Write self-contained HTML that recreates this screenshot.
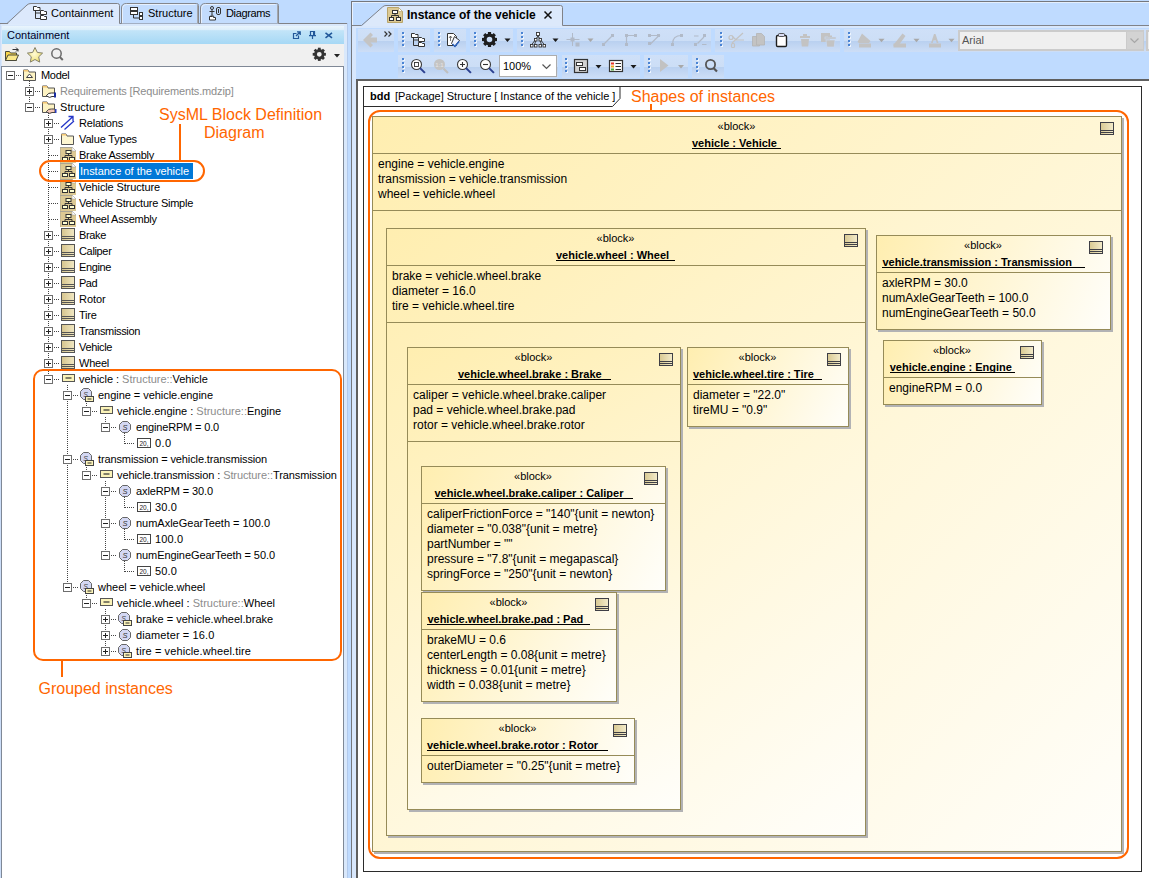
<!DOCTYPE html>
<html lang="en"><head><meta charset="utf-8"><title>Instance of the vehicle</title>
<style>
html,body{margin:0;padding:0}
body{width:1149px;height:878px;overflow:hidden;background:#bfdbff;position:relative;font-family:"Liberation Sans",sans-serif;font-size:11px;color:#000}
.a{position:absolute}
.t{position:absolute;white-space:pre;line-height:16px;height:16px}
.tr{position:absolute;white-space:pre;line-height:16px;height:16px;font-size:11px;left:0}
.g{color:#8c8c8c}
.blk{position:absolute;box-sizing:border-box;border:1px solid #968b58;box-shadow:2px 2px 0 #b2b2b4}
.blk .st{position:absolute;left:0;right:0;text-align:center;font-size:12px;line-height:14px;white-space:pre}
.blk .nm{position:absolute;left:0;right:0;text-align:center;font-size:11px;font-weight:bold;line-height:14px;white-space:pre}
.blk .nm span{text-decoration:underline}
.blk .sep{position:absolute;left:0;right:0;height:1px;background:#968b58}
.blk .at{position:absolute;left:5px;font-size:12px;line-height:15px;white-space:pre}
.ann{position:absolute;color:#ff6600;font-size:16px;line-height:18px;white-space:pre;text-align:center}
.ob{position:absolute;box-sizing:border-box;border:2px solid #ff6600}
</style></head>
<body>
<!-- left browser panel -->
<div class="a" style="left:0;top:23px;width:347px;height:1px;background:#808288"></div><div class="a" style="left:0;top:24px;width:347px;height:854px;background:#d9e8fb"></div><div class="a" style="left:347px;top:23px;width:1px;height:855px;background:#b3caec"></div><div class="a" style="left:0;top:24px;width:1px;height:854px;background:#cbddf8"></div><svg class="a" style="left:0;top:0" width="348" height="25" viewBox="0 0 348 25"><path d="M121.5 23.5V8q0-4.500 5-4.500h70q2 0 2 2V23.5" fill="#c3dcfd" stroke="#85878c"/><path d="M197.500 5V23" stroke="#a4a7ad" fill="none"/><path d="M122.500 23V8.500q0-4 4-4h69" stroke="#e6f0fe" fill="none"/><path d="M200.5 23.5V8q0-4.500 5-4.500h71q2 0 2 2V23.5" fill="#c3dcfd" stroke="#85878c"/><path d="M277.500 5V23" stroke="#a4a7ad" fill="none"/><path d="M201.500 23V8.500q0-4 4-4h70" stroke="#e6f0fe" fill="none"/><path d="M0 24.5 H7 L27 5 q1.500-1.500 4-1.500 H117.5 q2 0 2 2 V24.5 Z" fill="#dce9fc" stroke="none"/><path d="M0 23.5 H7 L27 5 q1.500-1.500 4-1.500 H117.5 q2 0 2 2 V23.5" fill="none" stroke="#808288"/><rect x="8" y="24" width="111" height="1" fill="#deebfc"/><g fill="#fff" stroke="#333" stroke-width="1"><path d="M33.500 10.500v-4h3l1 1h2.500v3z"/><path d="M40.500 14.500v-4h3l1 1h2v3z"/><path d="M40.500 19.500v-4h3l1 1h2v3z"/><path d="M35.500 10.500v8h5 M35.500 13h5" fill="none"/></g><g fill="#fff" stroke="#333" stroke-width="1"><rect x="130.500" y="7.500" width="7" height="3"/><rect x="130.500" y="11.500" width="7" height="3"/><rect x="139.500" y="12.500" width="3" height="3"/><rect x="139.500" y="16.500" width="3" height="3"/><path d="M133.500 14.500v3.500h6" fill="none"/></g><g fill="none" stroke="#333" stroke-width="1"><circle cx="212" cy="8" r="1.500"/><path d="M209.500 11.500h5 M212 9.500v5 M209.500 17.500l2.500-3l2.500 3"/><rect x="216.500" y="7.500" width="4" height="7" rx="1.500"/><path d="M218.500 9v4"/><path d="M209.500 16.500h3l1 1h2v2.500h-6z" fill="#fff"/></g></svg><div class="t" style="left:51px;top:5px">Containment</div><div class="t" style="left:148px;top:5px">Structure</div><div class="t" style="left:226px;top:5px;letter-spacing:-.35px">Diagrams</div><div class="a" style="left:2px;top:26px;width:342px;height:18px;background:linear-gradient(#eaf5fd 0%,#deeffb 20%,#c2e4f8 26%,#a6d8f5 100%)"></div><div class="t" style="left:7px;top:27px;color:#00002a">Containment</div><svg class="a" style="left:290px;top:28px" width="50" height="14" viewBox="0 0 50 14" fill="none" stroke="#22589a" stroke-width="1.500"><path d="M6.500 5.500h-3v5h5v-3" stroke-width="1.200"/><path d="M6 8l4-4 M7 3.800h3.200v3.200" stroke-width="1.300"/><path d="M20.500 3.500h4v4h-4z M19 7.700h7 M22.500 8v3" stroke-width="1.200"/><rect x="23" y="4" width="1.500" height="3.500" fill="#22589a" stroke="none"/><path d="M35.500 4.800l6.500 5 M42 4.800l-6.500 5" stroke-width="1.600"/></svg><div class="a" style="left:2px;top:44px;width:342px;height:22px;background:#f0f0f0"></div><svg class="a" style="left:2px;top:44px" width="342" height="22" viewBox="0 0 342 22"><path d="M3.500 16.500v-9h4l1 1.500h6v7.500z" fill="#f7d44c" stroke="#4a4a3a"/><path d="M3.500 16.500l2.500-5.500h10.500l-2.500 5.500z" fill="#fbe88a" stroke="#4a4a3a"/><path d="M10.500 5.500h5.500v2 M14 3.500l2 2l-2 2" fill="none" stroke="#333"/><path d="M33 3.500l2.300 4.900 5.300.7-3.900 3.700 1 5.300-4.700-2.600-4.700 2.600 1-5.300-3.900-3.700 5.300-.7z" fill="url(#stg)" stroke="#85826a" stroke-width="1"/><defs><radialGradient id="stg" cx=".45" cy=".45" r=".6"><stop offset="0" stop-color="#fffbd8"/><stop offset="1" stop-color="#efe06a"/></radialGradient></defs><circle cx="54.500" cy="9.500" r="4.700" fill="none" stroke="#6a6a6a" stroke-width="1.500"/><path d="M57.800 13l3 3" stroke="#6a6a6a" stroke-width="2" fill="none"/><g transform="translate(317.300 10.300)"><circle r="3.800" fill="none" stroke="#333" stroke-width="2.800"/><rect x="-1.400" y="-6.600" width="2.800" height="3" fill="#333" transform="rotate(0)"/><rect x="-1.400" y="-6.600" width="2.800" height="3" fill="#333" transform="rotate(45)"/><rect x="-1.400" y="-6.600" width="2.800" height="3" fill="#333" transform="rotate(90)"/><rect x="-1.400" y="-6.600" width="2.800" height="3" fill="#333" transform="rotate(135)"/><rect x="-1.400" y="-6.600" width="2.800" height="3" fill="#333" transform="rotate(180)"/><rect x="-1.400" y="-6.600" width="2.800" height="3" fill="#333" transform="rotate(225)"/><rect x="-1.400" y="-6.600" width="2.800" height="3" fill="#333" transform="rotate(270)"/><rect x="-1.400" y="-6.600" width="2.800" height="3" fill="#333" transform="rotate(315)"/></g><path d="M332 10h6l-3 3.500z" fill="#222"/></svg><div class="a" style="left:1px;top:66px;width:343px;height:812px;background:#7f8896"></div><div class="a" style="left:2px;top:67px;width:341px;height:811px;background:#fff"></div><svg class="a" style="left:0;top:0" width="346" height="878" viewBox="0 0 346 878" shape-rendering="crispEdges"><path d="M16 75.5H21" stroke="#444" stroke-dasharray="1 1" fill="none"/><path d="M29.5 81V104" stroke="#444" stroke-dasharray="1 1" fill="none"/><path d="M35 91.5H40" stroke="#444" stroke-dasharray="1 1" fill="none"/><path d="M35 107.5H40" stroke="#444" stroke-dasharray="1 1" fill="none"/><path d="M48.5 113V376" stroke="#444" stroke-dasharray="1 1" fill="none"/><path d="M54 123.5H59" stroke="#444" stroke-dasharray="1 1" fill="none"/><path d="M54 139.5H59" stroke="#444" stroke-dasharray="1 1" fill="none"/><path d="M49 155.5H59" stroke="#444" stroke-dasharray="1 1" fill="none"/><path d="M49 171.5H59" stroke="#444" stroke-dasharray="1 1" fill="none"/><path d="M49 187.5H59" stroke="#444" stroke-dasharray="1 1" fill="none"/><path d="M49 203.5H59" stroke="#444" stroke-dasharray="1 1" fill="none"/><path d="M49 219.5H59" stroke="#444" stroke-dasharray="1 1" fill="none"/><path d="M54 235.5H59" stroke="#444" stroke-dasharray="1 1" fill="none"/><path d="M54 251.5H59" stroke="#444" stroke-dasharray="1 1" fill="none"/><path d="M54 267.5H59" stroke="#444" stroke-dasharray="1 1" fill="none"/><path d="M54 283.5H59" stroke="#444" stroke-dasharray="1 1" fill="none"/><path d="M54 299.5H59" stroke="#444" stroke-dasharray="1 1" fill="none"/><path d="M54 315.5H59" stroke="#444" stroke-dasharray="1 1" fill="none"/><path d="M54 331.5H59" stroke="#444" stroke-dasharray="1 1" fill="none"/><path d="M54 347.5H59" stroke="#444" stroke-dasharray="1 1" fill="none"/><path d="M54 363.5H59" stroke="#444" stroke-dasharray="1 1" fill="none"/><path d="M54 379.5H59" stroke="#444" stroke-dasharray="1 1" fill="none"/><path d="M67.5 385V584" stroke="#444" stroke-dasharray="1 1" fill="none"/><path d="M73 395.5H78" stroke="#444" stroke-dasharray="1 1" fill="none"/><path d="M86.5 401V408" stroke="#444" stroke-dasharray="1 1" fill="none"/><path d="M92 411.5H97" stroke="#444" stroke-dasharray="1 1" fill="none"/><path d="M105.5 417V424" stroke="#444" stroke-dasharray="1 1" fill="none"/><path d="M111 427.5H116" stroke="#444" stroke-dasharray="1 1" fill="none"/><path d="M124.5 433V444" stroke="#444" stroke-dasharray="1 1" fill="none"/><path d="M125 443.5H135" stroke="#444" stroke-dasharray="1 1" fill="none"/><path d="M73 459.5H78" stroke="#444" stroke-dasharray="1 1" fill="none"/><path d="M86.5 465V472" stroke="#444" stroke-dasharray="1 1" fill="none"/><path d="M92 475.5H97" stroke="#444" stroke-dasharray="1 1" fill="none"/><path d="M105.5 481V552" stroke="#444" stroke-dasharray="1 1" fill="none"/><path d="M111 491.5H116" stroke="#444" stroke-dasharray="1 1" fill="none"/><path d="M124.5 497V508" stroke="#444" stroke-dasharray="1 1" fill="none"/><path d="M125 507.5H135" stroke="#444" stroke-dasharray="1 1" fill="none"/><path d="M111 523.5H116" stroke="#444" stroke-dasharray="1 1" fill="none"/><path d="M124.5 529V540" stroke="#444" stroke-dasharray="1 1" fill="none"/><path d="M125 539.5H135" stroke="#444" stroke-dasharray="1 1" fill="none"/><path d="M111 555.5H116" stroke="#444" stroke-dasharray="1 1" fill="none"/><path d="M124.5 561V572" stroke="#444" stroke-dasharray="1 1" fill="none"/><path d="M125 571.5H135" stroke="#444" stroke-dasharray="1 1" fill="none"/><path d="M73 587.5H78" stroke="#444" stroke-dasharray="1 1" fill="none"/><path d="M86.5 593V600" stroke="#444" stroke-dasharray="1 1" fill="none"/><path d="M92 603.5H97" stroke="#444" stroke-dasharray="1 1" fill="none"/><path d="M105.5 609V648" stroke="#444" stroke-dasharray="1 1" fill="none"/><path d="M111 619.5H116" stroke="#444" stroke-dasharray="1 1" fill="none"/><path d="M111 635.5H116" stroke="#444" stroke-dasharray="1 1" fill="none"/><path d="M111 651.5H116" stroke="#444" stroke-dasharray="1 1" fill="none"/></svg><div class="a" style="left:79px;top:163px;width:114px;height:16px;background:#0078d7"></div><svg class="a" style="left:6px;top:71px" width="9" height="9" viewBox="0 0 9 9" shape-rendering="crispEdges"><rect x=".5" y=".5" width="8" height="8" fill="#fff" stroke="#6e6e6e"/><path d="M2 4.500h5" stroke="#222" fill="none"/></svg><svg class="a" style="left:22px;top:67px" width="16" height="16" viewBox="0 0 16 16"><path d="M1.500 13.500v-10.500h4.500l1 2h6.500v8.500z" fill="#fdf3c3" stroke="#555"/><path d="M1.500 3h4.500l.8 1.600h-5.300z" fill="#f3c673" stroke="none"/><path d="M4.500 10.500l3-3.500l3 3.500z" fill="#fff" stroke="#444"/></svg><div class="tr" style="left:41px;top:67px;letter-spacing:-0.29px">Model</div><svg class="a" style="left:25px;top:87px" width="9" height="9" viewBox="0 0 9 9" shape-rendering="crispEdges"><rect x=".5" y=".5" width="8" height="8" fill="#fff" stroke="#6e6e6e"/><path d="M2 4.500h5 M4.500 2v5" stroke="#222" fill="none"/></svg><svg class="a" style="left:41px;top:83px" width="16" height="16" viewBox="0 0 16 16"><path d="M1.500 13.500v-10.500h4.500l1 2h6.500v8.500z" fill="#fdf3c3" stroke="#555"/><path d="M1.500 3h4.500l.8 1.600h-5.300z" fill="#f3c673" stroke="none"/><path d="M5.500 12.500q2-3 5-2.500l3.500 0v3.500h-3q-2 2-5.500-.5z" fill="#fff" stroke="#333"/><path d="M13 9.500h2v5h-2z" fill="#1a2ea0"/></svg><div class="tr" style="left:60px;top:83px;letter-spacing:-0.15px"><span class="g">Requirements [Requirements.mdzip]</span></div><svg class="a" style="left:25px;top:103px" width="9" height="9" viewBox="0 0 9 9" shape-rendering="crispEdges"><rect x=".5" y=".5" width="8" height="8" fill="#fff" stroke="#6e6e6e"/><path d="M2 4.500h5" stroke="#222" fill="none"/></svg><svg class="a" style="left:41px;top:99px" width="16" height="16" viewBox="0 0 16 16"><path d="M1.500 13.500v-10.500h4.500l1 2h6.500v8.500z" fill="#fdf3c3" stroke="#555"/><path d="M1.500 3h4.500l.8 1.600h-5.300z" fill="#f3c673" stroke="none"/><path d="M5.500 12.500q2-3 5-2.500l3.500 0v3.500h-3q-2 2-5.500-.5z" fill="#f6c9b8" stroke="#444"/><path d="M14 10h1.500v4h-1.500z" fill="#2a3ec0"/></svg><div class="tr" style="left:60px;top:99px;letter-spacing:0.04px">Structure</div><svg class="a" style="left:44px;top:119px" width="9" height="9" viewBox="0 0 9 9" shape-rendering="crispEdges"><rect x=".5" y=".5" width="8" height="8" fill="#fff" stroke="#6e6e6e"/><path d="M2 4.500h5 M4.500 2v5" stroke="#222" fill="none"/></svg><svg class="a" style="left:60px;top:115px" width="16" height="16" viewBox="0 0 16 16"><path d="M1 12.500L12.500 2 M8.500 1.500h4.500v4.500 M4.500 14.500L14 6" fill="none" stroke="#2436c8" stroke-width="1.300"/></svg><div class="tr" style="left:79px;top:115px;letter-spacing:-0.21px">Relations</div><svg class="a" style="left:44px;top:135px" width="9" height="9" viewBox="0 0 9 9" shape-rendering="crispEdges"><rect x=".5" y=".5" width="8" height="8" fill="#fff" stroke="#6e6e6e"/><path d="M2 4.500h5 M4.500 2v5" stroke="#222" fill="none"/></svg><svg class="a" style="left:60px;top:131px" width="16" height="16" viewBox="0 0 16 16"><path d="M1.500 13.500v-10.500h4.500l1 2h6.500v8.500z" fill="#fdf6d0" stroke="#555"/><path d="M1.500 3h4.500l.8 1.600h-5.300z" fill="#f3c673" stroke="none"/></svg><div class="tr" style="left:79px;top:131px;letter-spacing:-0.14px">Value Types</div><svg class="a" style="left:60px;top:147px" width="16" height="16" viewBox="0 0 16 16"><path d="M0 0h12l4 4v12h-16z" fill="#dcc993"/><path d="M12 0l4 4h-4z" fill="#fff" stroke="#999" stroke-width=".5"/><path d="M0 16V.5H12" fill="none" stroke="#a9a596"/><g fill="#ffffd2" stroke="#333"><rect x="6" y="3.500" width="5" height="3"/><rect x="2.500" y="10.500" width="5" height="3"/><rect x="9.500" y="10.500" width="5" height="3"/><path d="M8.500 6.500v2 M5 10.500v-2h7v2" fill="none"/></g></svg><div class="tr" style="left:79px;top:147px;letter-spacing:-0.28px">Brake Assembly</div><svg class="a" style="left:60px;top:163px" width="16" height="16" viewBox="0 0 16 16"><path d="M0 0h12l4 4v12h-16z" fill="#dcc993"/><path d="M12 0l4 4h-4z" fill="#fff" stroke="#999" stroke-width=".5"/><path d="M0 16V.5H12" fill="none" stroke="#a9a596"/><g fill="#ffffd2" stroke="#333"><rect x="6" y="3.500" width="5" height="3"/><rect x="2.500" y="10.500" width="5" height="3"/><rect x="9.500" y="10.500" width="5" height="3"/><path d="M8.500 6.500v2 M5 10.500v-2h7v2" fill="none"/></g></svg><div class="tr" style="left:80px;top:163px;color:#fff;letter-spacing:-0.02px">Instance of the vehicle</div><svg class="a" style="left:60px;top:179px" width="16" height="16" viewBox="0 0 16 16"><path d="M0 0h12l4 4v12h-16z" fill="#dcc993"/><path d="M12 0l4 4h-4z" fill="#fff" stroke="#999" stroke-width=".5"/><path d="M0 16V.5H12" fill="none" stroke="#a9a596"/><g fill="#ffffd2" stroke="#333"><rect x="6" y="3.500" width="5" height="3"/><rect x="2.500" y="10.500" width="5" height="3"/><rect x="9.500" y="10.500" width="5" height="3"/><path d="M8.500 6.500v2 M5 10.500v-2h7v2" fill="none"/></g></svg><div class="tr" style="left:79px;top:179px;letter-spacing:-0.13px">Vehicle Structure</div><svg class="a" style="left:60px;top:195px" width="16" height="16" viewBox="0 0 16 16"><path d="M0 0h12l4 4v12h-16z" fill="#dcc993"/><path d="M12 0l4 4h-4z" fill="#fff" stroke="#999" stroke-width=".5"/><path d="M0 16V.5H12" fill="none" stroke="#a9a596"/><g fill="#ffffd2" stroke="#333"><rect x="6" y="3.500" width="5" height="3"/><rect x="2.500" y="10.500" width="5" height="3"/><rect x="9.500" y="10.500" width="5" height="3"/><path d="M8.500 6.500v2 M5 10.500v-2h7v2" fill="none"/></g></svg><div class="tr" style="left:79px;top:195px;letter-spacing:-0.24px">Vehicle Structure Simple</div><svg class="a" style="left:60px;top:211px" width="16" height="16" viewBox="0 0 16 16"><path d="M0 0h12l4 4v12h-16z" fill="#dcc993"/><path d="M12 0l4 4h-4z" fill="#fff" stroke="#999" stroke-width=".5"/><path d="M0 16V.5H12" fill="none" stroke="#a9a596"/><g fill="#ffffd2" stroke="#333"><rect x="6" y="3.500" width="5" height="3"/><rect x="2.500" y="10.500" width="5" height="3"/><rect x="9.500" y="10.500" width="5" height="3"/><path d="M8.500 6.500v2 M5 10.500v-2h7v2" fill="none"/></g></svg><div class="tr" style="left:79px;top:211px;letter-spacing:-0.26px">Wheel Assembly</div><svg class="a" style="left:44px;top:231px" width="9" height="9" viewBox="0 0 9 9" shape-rendering="crispEdges"><rect x=".5" y=".5" width="8" height="8" fill="#fff" stroke="#6e6e6e"/><path d="M2 4.500h5 M4.500 2v5" stroke="#222" fill="none"/></svg><svg class="a" style="left:60px;top:227px" width="16" height="16" viewBox="0 0 16 16"><defs><linearGradient id="bg" x1="0" y1="0" x2="1" y2="0"><stop offset="0" stop-color="#d6c48c"/><stop offset="1" stop-color="#f1e8c4"/></linearGradient></defs><rect x="1.500" y="1.500" width="13" height="12" fill="url(#bg)" stroke="#555"/><path d="M2 9.500h12 M2 11.500h12" stroke="#555" fill="none"/></svg><div class="tr" style="left:79px;top:227px;letter-spacing:-0.35px">Brake</div><svg class="a" style="left:44px;top:247px" width="9" height="9" viewBox="0 0 9 9" shape-rendering="crispEdges"><rect x=".5" y=".5" width="8" height="8" fill="#fff" stroke="#6e6e6e"/><path d="M2 4.500h5 M4.500 2v5" stroke="#222" fill="none"/></svg><svg class="a" style="left:60px;top:243px" width="16" height="16" viewBox="0 0 16 16"><defs><linearGradient id="bg" x1="0" y1="0" x2="1" y2="0"><stop offset="0" stop-color="#d6c48c"/><stop offset="1" stop-color="#f1e8c4"/></linearGradient></defs><rect x="1.500" y="1.500" width="13" height="12" fill="url(#bg)" stroke="#555"/><path d="M2 9.500h12 M2 11.500h12" stroke="#555" fill="none"/></svg><div class="tr" style="left:79px;top:243px;letter-spacing:-0.34px">Caliper</div><svg class="a" style="left:44px;top:263px" width="9" height="9" viewBox="0 0 9 9" shape-rendering="crispEdges"><rect x=".5" y=".5" width="8" height="8" fill="#fff" stroke="#6e6e6e"/><path d="M2 4.500h5 M4.500 2v5" stroke="#222" fill="none"/></svg><svg class="a" style="left:60px;top:259px" width="16" height="16" viewBox="0 0 16 16"><defs><linearGradient id="bg" x1="0" y1="0" x2="1" y2="0"><stop offset="0" stop-color="#d6c48c"/><stop offset="1" stop-color="#f1e8c4"/></linearGradient></defs><rect x="1.500" y="1.500" width="13" height="12" fill="url(#bg)" stroke="#555"/><path d="M2 9.500h12 M2 11.500h12" stroke="#555" fill="none"/></svg><div class="tr" style="left:79px;top:259px;letter-spacing:-0.38px">Engine</div><svg class="a" style="left:44px;top:279px" width="9" height="9" viewBox="0 0 9 9" shape-rendering="crispEdges"><rect x=".5" y=".5" width="8" height="8" fill="#fff" stroke="#6e6e6e"/><path d="M2 4.500h5 M4.500 2v5" stroke="#222" fill="none"/></svg><svg class="a" style="left:60px;top:275px" width="16" height="16" viewBox="0 0 16 16"><defs><linearGradient id="bg" x1="0" y1="0" x2="1" y2="0"><stop offset="0" stop-color="#d6c48c"/><stop offset="1" stop-color="#f1e8c4"/></linearGradient></defs><rect x="1.500" y="1.500" width="13" height="12" fill="url(#bg)" stroke="#555"/><path d="M2 9.500h12 M2 11.500h12" stroke="#555" fill="none"/></svg><div class="tr" style="left:79px;top:275px;letter-spacing:-0.53px">Pad</div><svg class="a" style="left:44px;top:295px" width="9" height="9" viewBox="0 0 9 9" shape-rendering="crispEdges"><rect x=".5" y=".5" width="8" height="8" fill="#fff" stroke="#6e6e6e"/><path d="M2 4.500h5 M4.500 2v5" stroke="#222" fill="none"/></svg><svg class="a" style="left:60px;top:291px" width="16" height="16" viewBox="0 0 16 16"><defs><linearGradient id="bg" x1="0" y1="0" x2="1" y2="0"><stop offset="0" stop-color="#d6c48c"/><stop offset="1" stop-color="#f1e8c4"/></linearGradient></defs><rect x="1.500" y="1.500" width="13" height="12" fill="url(#bg)" stroke="#555"/><path d="M2 9.500h12 M2 11.500h12" stroke="#555" fill="none"/></svg><div class="tr" style="left:79px;top:291px;letter-spacing:-0.06px">Rotor</div><svg class="a" style="left:44px;top:311px" width="9" height="9" viewBox="0 0 9 9" shape-rendering="crispEdges"><rect x=".5" y=".5" width="8" height="8" fill="#fff" stroke="#6e6e6e"/><path d="M2 4.500h5 M4.500 2v5" stroke="#222" fill="none"/></svg><svg class="a" style="left:60px;top:307px" width="16" height="16" viewBox="0 0 16 16"><defs><linearGradient id="bg" x1="0" y1="0" x2="1" y2="0"><stop offset="0" stop-color="#d6c48c"/><stop offset="1" stop-color="#f1e8c4"/></linearGradient></defs><rect x="1.500" y="1.500" width="13" height="12" fill="url(#bg)" stroke="#555"/><path d="M2 9.500h12 M2 11.500h12" stroke="#555" fill="none"/></svg><div class="tr" style="left:79px;top:307px;letter-spacing:-0.19px">Tire</div><svg class="a" style="left:44px;top:327px" width="9" height="9" viewBox="0 0 9 9" shape-rendering="crispEdges"><rect x=".5" y=".5" width="8" height="8" fill="#fff" stroke="#6e6e6e"/><path d="M2 4.500h5 M4.500 2v5" stroke="#222" fill="none"/></svg><svg class="a" style="left:60px;top:323px" width="16" height="16" viewBox="0 0 16 16"><defs><linearGradient id="bg" x1="0" y1="0" x2="1" y2="0"><stop offset="0" stop-color="#d6c48c"/><stop offset="1" stop-color="#f1e8c4"/></linearGradient></defs><rect x="1.500" y="1.500" width="13" height="12" fill="url(#bg)" stroke="#555"/><path d="M2 9.500h12 M2 11.500h12" stroke="#555" fill="none"/></svg><div class="tr" style="left:79px;top:323px;letter-spacing:-0.33px">Transmission</div><svg class="a" style="left:44px;top:343px" width="9" height="9" viewBox="0 0 9 9" shape-rendering="crispEdges"><rect x=".5" y=".5" width="8" height="8" fill="#fff" stroke="#6e6e6e"/><path d="M2 4.500h5 M4.500 2v5" stroke="#222" fill="none"/></svg><svg class="a" style="left:60px;top:339px" width="16" height="16" viewBox="0 0 16 16"><defs><linearGradient id="bg" x1="0" y1="0" x2="1" y2="0"><stop offset="0" stop-color="#d6c48c"/><stop offset="1" stop-color="#f1e8c4"/></linearGradient></defs><rect x="1.500" y="1.500" width="13" height="12" fill="url(#bg)" stroke="#555"/><path d="M2 9.500h12 M2 11.500h12" stroke="#555" fill="none"/></svg><div class="tr" style="left:79px;top:339px;letter-spacing:-0.35px">Vehicle</div><svg class="a" style="left:44px;top:359px" width="9" height="9" viewBox="0 0 9 9" shape-rendering="crispEdges"><rect x=".5" y=".5" width="8" height="8" fill="#fff" stroke="#6e6e6e"/><path d="M2 4.500h5 M4.500 2v5" stroke="#222" fill="none"/></svg><svg class="a" style="left:60px;top:355px" width="16" height="16" viewBox="0 0 16 16"><defs><linearGradient id="bg" x1="0" y1="0" x2="1" y2="0"><stop offset="0" stop-color="#d6c48c"/><stop offset="1" stop-color="#f1e8c4"/></linearGradient></defs><rect x="1.500" y="1.500" width="13" height="12" fill="url(#bg)" stroke="#555"/><path d="M2 9.500h12 M2 11.500h12" stroke="#555" fill="none"/></svg><div class="tr" style="left:79px;top:355px;letter-spacing:-0.24px">Wheel</div><svg class="a" style="left:44px;top:375px" width="9" height="9" viewBox="0 0 9 9" shape-rendering="crispEdges"><rect x=".5" y=".5" width="8" height="8" fill="#fff" stroke="#6e6e6e"/><path d="M2 4.500h5" stroke="#222" fill="none"/></svg><svg class="a" style="left:60px;top:371px" width="16" height="16" viewBox="0 0 16 16"><rect x="2.500" y="3.500" width="12" height="7" fill="#fbf3b8" stroke="#555"/><path d="M5.500 7h6" stroke="#333" stroke-width="1.200"/></svg><div class="tr" style="left:79px;top:371px;letter-spacing:-0.03px">vehicle : <span class="g">Structure::</span>Vehicle</div><svg class="a" style="left:63px;top:391px" width="9" height="9" viewBox="0 0 9 9" shape-rendering="crispEdges"><rect x=".5" y=".5" width="8" height="8" fill="#fff" stroke="#6e6e6e"/><path d="M2 4.500h5" stroke="#222" fill="none"/></svg><svg class="a" style="left:79px;top:387px" width="16" height="16" viewBox="0 0 16 16"><path d="M4.500 1.500h5l3 3v5l-3 3h-5l-3-3v-5z" fill="#d3d7f3" stroke="#666"/><text x="6.500" y="9.500" font-size="7" font-style="italic" text-anchor="middle" fill="#444" font-family="Liberation Sans, sans-serif">S</text><rect x="6.500" y="9.500" width="8" height="5" fill="#fbf3b8" stroke="#444"/><path d="M8.500 12h4" stroke="#333"/></svg><div class="tr" style="left:98px;top:387px;letter-spacing:-0.04px">engine = vehicle.engine</div><svg class="a" style="left:82px;top:407px" width="9" height="9" viewBox="0 0 9 9" shape-rendering="crispEdges"><rect x=".5" y=".5" width="8" height="8" fill="#fff" stroke="#6e6e6e"/><path d="M2 4.500h5" stroke="#222" fill="none"/></svg><svg class="a" style="left:98px;top:403px" width="16" height="16" viewBox="0 0 16 16"><rect x="2.500" y="3.500" width="12" height="7" fill="#fbf3b8" stroke="#555"/><path d="M5.500 7h6" stroke="#333" stroke-width="1.200"/></svg><div class="tr" style="left:117px;top:403px;letter-spacing:-0.01px">vehicle.engine : <span class="g">Structure::</span>Engine</div><svg class="a" style="left:101px;top:423px" width="9" height="9" viewBox="0 0 9 9" shape-rendering="crispEdges"><rect x=".5" y=".5" width="8" height="8" fill="#fff" stroke="#6e6e6e"/><path d="M2 4.500h5" stroke="#222" fill="none"/></svg><svg class="a" style="left:117px;top:419px" width="16" height="16" viewBox="0 0 16 16"><path d="M5.500 2.500h5l3 3v5l-3 3h-5l-3-3v-5z" fill="#d3d7f3" stroke="#666"/><text x="8" y="10.800" font-size="7.500" font-style="italic" text-anchor="middle" fill="#333" font-family="Liberation Sans, sans-serif">S</text></svg><div class="tr" style="left:136px;top:419px;letter-spacing:-0.15px">engineRPM = 0.0</div><svg class="a" style="left:136px;top:435px" width="16" height="16" viewBox="0 0 16 16"><rect x="1.500" y="3.500" width="13" height="9" fill="#fff" stroke="#444"/><text x="8" y="10.600" font-size="6.500" text-anchor="middle" fill="#222" font-family="Liberation Sans, sans-serif">20,</text></svg><div class="tr" style="left:155px;top:435px;letter-spacing:0.37px">0.0</div><svg class="a" style="left:63px;top:455px" width="9" height="9" viewBox="0 0 9 9" shape-rendering="crispEdges"><rect x=".5" y=".5" width="8" height="8" fill="#fff" stroke="#6e6e6e"/><path d="M2 4.500h5" stroke="#222" fill="none"/></svg><svg class="a" style="left:79px;top:451px" width="16" height="16" viewBox="0 0 16 16"><path d="M4.500 1.500h5l3 3v5l-3 3h-5l-3-3v-5z" fill="#d3d7f3" stroke="#666"/><text x="6.500" y="9.500" font-size="7" font-style="italic" text-anchor="middle" fill="#444" font-family="Liberation Sans, sans-serif">S</text><rect x="6.500" y="9.500" width="8" height="5" fill="#fbf3b8" stroke="#444"/><path d="M8.500 12h4" stroke="#333"/></svg><div class="tr" style="left:98px;top:451px;letter-spacing:-0.12px">transmission = vehicle.transmission</div><svg class="a" style="left:82px;top:471px" width="9" height="9" viewBox="0 0 9 9" shape-rendering="crispEdges"><rect x=".5" y=".5" width="8" height="8" fill="#fff" stroke="#6e6e6e"/><path d="M2 4.500h5" stroke="#222" fill="none"/></svg><svg class="a" style="left:98px;top:467px" width="16" height="16" viewBox="0 0 16 16"><rect x="2.500" y="3.500" width="12" height="7" fill="#fbf3b8" stroke="#555"/><path d="M5.500 7h6" stroke="#333" stroke-width="1.200"/></svg><div class="tr" style="left:117px;top:467px;letter-spacing:-0.09px">vehicle.transmission : <span class="g">Structure::</span>Transmission</div><svg class="a" style="left:101px;top:487px" width="9" height="9" viewBox="0 0 9 9" shape-rendering="crispEdges"><rect x=".5" y=".5" width="8" height="8" fill="#fff" stroke="#6e6e6e"/><path d="M2 4.500h5" stroke="#222" fill="none"/></svg><svg class="a" style="left:117px;top:483px" width="16" height="16" viewBox="0 0 16 16"><path d="M5.500 2.500h5l3 3v5l-3 3h-5l-3-3v-5z" fill="#d3d7f3" stroke="#666"/><text x="8" y="10.800" font-size="7.500" font-style="italic" text-anchor="middle" fill="#333" font-family="Liberation Sans, sans-serif">S</text></svg><div class="tr" style="left:136px;top:483px;letter-spacing:-0.11px">axleRPM = 30.0</div><svg class="a" style="left:136px;top:499px" width="16" height="16" viewBox="0 0 16 16"><rect x="1.500" y="3.500" width="13" height="9" fill="#fff" stroke="#444"/><text x="8" y="10.600" font-size="6.500" text-anchor="middle" fill="#222" font-family="Liberation Sans, sans-serif">20,</text></svg><div class="tr" style="left:155px;top:499px;letter-spacing:0.14px">30.0</div><svg class="a" style="left:101px;top:519px" width="9" height="9" viewBox="0 0 9 9" shape-rendering="crispEdges"><rect x=".5" y=".5" width="8" height="8" fill="#fff" stroke="#6e6e6e"/><path d="M2 4.500h5" stroke="#222" fill="none"/></svg><svg class="a" style="left:117px;top:515px" width="16" height="16" viewBox="0 0 16 16"><path d="M5.500 2.500h5l3 3v5l-3 3h-5l-3-3v-5z" fill="#d3d7f3" stroke="#666"/><text x="8" y="10.800" font-size="7.500" font-style="italic" text-anchor="middle" fill="#333" font-family="Liberation Sans, sans-serif">S</text></svg><div class="tr" style="left:136px;top:515px;letter-spacing:-0.01px">numAxleGearTeeth = 100.0</div><svg class="a" style="left:136px;top:531px" width="16" height="16" viewBox="0 0 16 16"><rect x="1.500" y="3.500" width="13" height="9" fill="#fff" stroke="#444"/><text x="8" y="10.600" font-size="6.500" text-anchor="middle" fill="#222" font-family="Liberation Sans, sans-serif">20,</text></svg><div class="tr" style="left:155px;top:531px;letter-spacing:0.15px">100.0</div><svg class="a" style="left:101px;top:551px" width="9" height="9" viewBox="0 0 9 9" shape-rendering="crispEdges"><rect x=".5" y=".5" width="8" height="8" fill="#fff" stroke="#6e6e6e"/><path d="M2 4.500h5" stroke="#222" fill="none"/></svg><svg class="a" style="left:117px;top:547px" width="16" height="16" viewBox="0 0 16 16"><path d="M5.500 2.500h5l3 3v5l-3 3h-5l-3-3v-5z" fill="#d3d7f3" stroke="#666"/><text x="8" y="10.800" font-size="7.500" font-style="italic" text-anchor="middle" fill="#333" font-family="Liberation Sans, sans-serif">S</text></svg><div class="tr" style="left:136px;top:547px;letter-spacing:-0.08px">numEngineGearTeeth = 50.0</div><svg class="a" style="left:136px;top:563px" width="16" height="16" viewBox="0 0 16 16"><rect x="1.500" y="3.500" width="13" height="9" fill="#fff" stroke="#444"/><text x="8" y="10.600" font-size="6.500" text-anchor="middle" fill="#222" font-family="Liberation Sans, sans-serif">20,</text></svg><div class="tr" style="left:155px;top:563px;letter-spacing:0.14px">50.0</div><svg class="a" style="left:63px;top:583px" width="9" height="9" viewBox="0 0 9 9" shape-rendering="crispEdges"><rect x=".5" y=".5" width="8" height="8" fill="#fff" stroke="#6e6e6e"/><path d="M2 4.500h5" stroke="#222" fill="none"/></svg><svg class="a" style="left:79px;top:579px" width="16" height="16" viewBox="0 0 16 16"><path d="M4.500 1.500h5l3 3v5l-3 3h-5l-3-3v-5z" fill="#d3d7f3" stroke="#666"/><text x="6.500" y="9.500" font-size="7" font-style="italic" text-anchor="middle" fill="#444" font-family="Liberation Sans, sans-serif">S</text><rect x="6.500" y="9.500" width="8" height="5" fill="#fbf3b8" stroke="#444"/><path d="M8.500 12h4" stroke="#333"/></svg><div class="tr" style="left:98px;top:579px">wheel = vehicle.wheel</div><svg class="a" style="left:82px;top:599px" width="9" height="9" viewBox="0 0 9 9" shape-rendering="crispEdges"><rect x=".5" y=".5" width="8" height="8" fill="#fff" stroke="#6e6e6e"/><path d="M2 4.500h5" stroke="#222" fill="none"/></svg><svg class="a" style="left:98px;top:595px" width="16" height="16" viewBox="0 0 16 16"><rect x="2.500" y="3.500" width="12" height="7" fill="#fbf3b8" stroke="#555"/><path d="M5.500 7h6" stroke="#333" stroke-width="1.200"/></svg><div class="tr" style="left:117px;top:595px;letter-spacing:0.03px">vehicle.wheel : <span class="g">Structure::</span>Wheel</div><svg class="a" style="left:101px;top:615px" width="9" height="9" viewBox="0 0 9 9" shape-rendering="crispEdges"><rect x=".5" y=".5" width="8" height="8" fill="#fff" stroke="#6e6e6e"/><path d="M2 4.500h5 M4.500 2v5" stroke="#222" fill="none"/></svg><svg class="a" style="left:117px;top:611px" width="16" height="16" viewBox="0 0 16 16"><path d="M4.500 1.500h5l3 3v5l-3 3h-5l-3-3v-5z" fill="#d3d7f3" stroke="#666"/><text x="6.500" y="9.500" font-size="7" font-style="italic" text-anchor="middle" fill="#444" font-family="Liberation Sans, sans-serif">S</text><rect x="6.500" y="9.500" width="8" height="5" fill="#fbf3b8" stroke="#444"/><path d="M8.500 12h4" stroke="#333"/></svg><div class="tr" style="left:136px;top:611px;letter-spacing:0.02px">brake = vehicle.wheel.brake</div><svg class="a" style="left:101px;top:631px" width="9" height="9" viewBox="0 0 9 9" shape-rendering="crispEdges"><rect x=".5" y=".5" width="8" height="8" fill="#fff" stroke="#6e6e6e"/><path d="M2 4.500h5 M4.500 2v5" stroke="#222" fill="none"/></svg><svg class="a" style="left:117px;top:627px" width="16" height="16" viewBox="0 0 16 16"><path d="M5.500 2.500h5l3 3v5l-3 3h-5l-3-3v-5z" fill="#d3d7f3" stroke="#666"/><text x="8" y="10.800" font-size="7.500" font-style="italic" text-anchor="middle" fill="#333" font-family="Liberation Sans, sans-serif">S</text></svg><div class="tr" style="left:136px;top:627px;letter-spacing:0.11px">diameter = 16.0</div><svg class="a" style="left:101px;top:647px" width="9" height="9" viewBox="0 0 9 9" shape-rendering="crispEdges"><rect x=".5" y=".5" width="8" height="8" fill="#fff" stroke="#6e6e6e"/><path d="M2 4.500h5 M4.500 2v5" stroke="#222" fill="none"/></svg><svg class="a" style="left:117px;top:643px" width="16" height="16" viewBox="0 0 16 16"><path d="M4.500 1.500h5l3 3v5l-3 3h-5l-3-3v-5z" fill="#d3d7f3" stroke="#666"/><text x="6.500" y="9.500" font-size="7" font-style="italic" text-anchor="middle" fill="#444" font-family="Liberation Sans, sans-serif">S</text><rect x="6.500" y="9.500" width="8" height="5" fill="#fbf3b8" stroke="#444"/><path d="M8.500 12h4" stroke="#333"/></svg><div class="tr" style="left:136px;top:643px;letter-spacing:0.11px">tire = vehicle.wheel.tire</div>
<div class="ann" style="left:159px;top:106px;text-align:left">SysML Block Definition</div><div class="ann" style="left:204px;top:124px;text-align:left">Diagram</div><div class="a" style="left:178.500px;top:124px;width:2px;height:37px;background:#ff6600"></div><div class="ob" style="left:39px;top:160px;width:166px;height:22px;border-radius:11px"></div><div class="ob" style="left:33px;top:369px;width:309px;height:292px;border-radius:10px"></div><div class="a" style="left:61px;top:660px;width:2px;height:17px;background:#ff6600"></div><div class="ann" style="left:38.500px;top:680px;text-align:left">Grouped instances</div>
<!-- diagram panel -->
<div class="a" style="left:351px;top:1px;width:798px;height:877px;background:#74777d"></div><div class="a" style="left:352px;top:2px;width:797px;height:876px;background:#bfdbff"></div><div class="a" style="left:352px;top:2px;width:797px;height:1px;background:#e4effd"></div><div class="a" style="left:352px;top:2px;width:1px;height:876px;background:#eaf2fe"></div><svg class="a" style="left:352px;top:2px" width="797" height="25" viewBox="352 2 797 25"><path d="M352 26.500H361.500 L382.500 7 q1.500-1.500 3.500-1.500 H560.500 q2 0 2 2 V26.500 Z" fill="#dce9fb"/><path d="M352 25.500H361.500 L382.500 7 q1.500-1.500 3.500-1.500 H560.500 q2 0 2 2 V25.500 H1149" fill="none" stroke="#808288"/></svg><div class="a" style="left:352px;top:26px;width:797px;height:54px;background:#bfdbff"></div><div class="a" style="left:352px;top:26px;width:797px;height:2px;background:#d8e7fc"></div><svg class="a" style="left:387px;top:7px" width="16" height="16" viewBox="0 0 16 16"><path d="M.5 .5h11l4 4v11h-15z" fill="#dcc993" stroke="#b9a56a"/><path d="M11.500 .5l4 4h-4z" fill="#fff" stroke="#b9a56a" stroke-width=".7"/><g fill="#fff" stroke="#333"><rect x="5.500" y="3.500" width="5" height="3"/><rect x="2.500" y="10.500" width="4" height="3"/><rect x="9.500" y="10.500" width="4" height="3"/><path d="M8 6.500v2 M4.500 10.500v-2h7v2" fill="none"/></g></svg><div class="t" style="left:407px;top:7px;font-size:12px;font-weight:bold">Instance of the vehicle</div><svg class="a" style="left:543px;top:10px" width="10" height="10" viewBox="0 0 10 10"><path d="M1.500 1.500l7 7 M8.500 1.500l-7 7" stroke="#111" stroke-width="1.500" fill="none"/></svg><div class="a" style="left:358px;top:29px;width:36px;height:23px;background:linear-gradient(#cfe0f8 0,#ccdef6 52%,#b9d0f0 52%,#cddef6 100%)"></div><div class="a" style="left:398px;top:29px;width:32px;height:23px;background:linear-gradient(#cfe0f8 0,#ccdef6 52%,#b9d0f0 52%,#cddef6 100%)"></div><div class="a" style="left:434px;top:29px;width:32px;height:23px;background:linear-gradient(#cfe0f8 0,#ccdef6 52%,#b9d0f0 52%,#cddef6 100%)"></div><div class="a" style="left:470px;top:29px;width:43px;height:23px;background:linear-gradient(#cfe0f8 0,#ccdef6 52%,#b9d0f0 52%,#cddef6 100%)"></div><div class="a" style="left:517px;top:29px;width:194px;height:23px;background:linear-gradient(#cfe0f8 0,#ccdef6 52%,#b9d0f0 52%,#cddef6 100%)"></div><div class="a" style="left:715px;top:29px;width:125px;height:23px;background:linear-gradient(#cfe0f8 0,#ccdef6 52%,#b9d0f0 52%,#cddef6 100%)"></div><div class="a" style="left:844px;top:29px;width:305px;height:23px;background:linear-gradient(#cfe0f8 0,#ccdef6 52%,#b9d0f0 52%,#cddef6 100%)"></div><div class="a" style="left:398px;top:55px;width:160px;height:23px;background:linear-gradient(#cfe0f8 0,#ccdef6 52%,#b9d0f0 52%,#cddef6 100%)"></div><div class="a" style="left:562px;top:55px;width:78px;height:23px;background:linear-gradient(#cfe0f8 0,#ccdef6 52%,#b9d0f0 52%,#cddef6 100%)"></div><div class="a" style="left:644px;top:55px;width:44px;height:23px;background:linear-gradient(#cfe0f8 0,#ccdef6 52%,#b9d0f0 52%,#cddef6 100%)"></div><div class="a" style="left:692px;top:55px;width:32px;height:23px;background:linear-gradient(#cfe0f8 0,#ccdef6 52%,#b9d0f0 52%,#cddef6 100%)"></div><svg class="a" style="left:402px;top:32px" width="3" height="16" viewBox="0 0 3 16"><rect x="1" y="1" width="2" height="2" fill="#eef5ff"/><rect x="0" y="0" width="2" height="2" fill="#4a84d4"/><rect x="1" y="5" width="2" height="2" fill="#eef5ff"/><rect x="0" y="4" width="2" height="2" fill="#4a84d4"/><rect x="1" y="9" width="2" height="2" fill="#eef5ff"/><rect x="0" y="8" width="2" height="2" fill="#4a84d4"/><rect x="1" y="13" width="2" height="2" fill="#eef5ff"/><rect x="0" y="12" width="2" height="2" fill="#4a84d4"/></svg><svg class="a" style="left:438px;top:32px" width="3" height="16" viewBox="0 0 3 16"><rect x="1" y="1" width="2" height="2" fill="#eef5ff"/><rect x="0" y="0" width="2" height="2" fill="#4a84d4"/><rect x="1" y="5" width="2" height="2" fill="#eef5ff"/><rect x="0" y="4" width="2" height="2" fill="#4a84d4"/><rect x="1" y="9" width="2" height="2" fill="#eef5ff"/><rect x="0" y="8" width="2" height="2" fill="#4a84d4"/><rect x="1" y="13" width="2" height="2" fill="#eef5ff"/><rect x="0" y="12" width="2" height="2" fill="#4a84d4"/></svg><svg class="a" style="left:474px;top:32px" width="3" height="16" viewBox="0 0 3 16"><rect x="1" y="1" width="2" height="2" fill="#eef5ff"/><rect x="0" y="0" width="2" height="2" fill="#4a84d4"/><rect x="1" y="5" width="2" height="2" fill="#eef5ff"/><rect x="0" y="4" width="2" height="2" fill="#4a84d4"/><rect x="1" y="9" width="2" height="2" fill="#eef5ff"/><rect x="0" y="8" width="2" height="2" fill="#4a84d4"/><rect x="1" y="13" width="2" height="2" fill="#eef5ff"/><rect x="0" y="12" width="2" height="2" fill="#4a84d4"/></svg><svg class="a" style="left:521px;top:32px" width="3" height="16" viewBox="0 0 3 16"><rect x="1" y="1" width="2" height="2" fill="#eef5ff"/><rect x="0" y="0" width="2" height="2" fill="#4a84d4"/><rect x="1" y="5" width="2" height="2" fill="#eef5ff"/><rect x="0" y="4" width="2" height="2" fill="#4a84d4"/><rect x="1" y="9" width="2" height="2" fill="#eef5ff"/><rect x="0" y="8" width="2" height="2" fill="#4a84d4"/><rect x="1" y="13" width="2" height="2" fill="#eef5ff"/><rect x="0" y="12" width="2" height="2" fill="#4a84d4"/></svg><svg class="a" style="left:720px;top:32px" width="3" height="16" viewBox="0 0 3 16"><rect x="1" y="1" width="2" height="2" fill="#eef5ff"/><rect x="0" y="0" width="2" height="2" fill="#4a84d4"/><rect x="1" y="5" width="2" height="2" fill="#eef5ff"/><rect x="0" y="4" width="2" height="2" fill="#4a84d4"/><rect x="1" y="9" width="2" height="2" fill="#eef5ff"/><rect x="0" y="8" width="2" height="2" fill="#4a84d4"/><rect x="1" y="13" width="2" height="2" fill="#eef5ff"/><rect x="0" y="12" width="2" height="2" fill="#4a84d4"/></svg><svg class="a" style="left:848px;top:32px" width="3" height="16" viewBox="0 0 3 16"><rect x="1" y="1" width="2" height="2" fill="#eef5ff"/><rect x="0" y="0" width="2" height="2" fill="#4a84d4"/><rect x="1" y="5" width="2" height="2" fill="#eef5ff"/><rect x="0" y="4" width="2" height="2" fill="#4a84d4"/><rect x="1" y="9" width="2" height="2" fill="#eef5ff"/><rect x="0" y="8" width="2" height="2" fill="#4a84d4"/><rect x="1" y="13" width="2" height="2" fill="#eef5ff"/><rect x="0" y="12" width="2" height="2" fill="#4a84d4"/></svg><svg class="a" style="left:402px;top:58px" width="3" height="16" viewBox="0 0 3 16"><rect x="1" y="1" width="2" height="2" fill="#eef5ff"/><rect x="0" y="0" width="2" height="2" fill="#4a84d4"/><rect x="1" y="5" width="2" height="2" fill="#eef5ff"/><rect x="0" y="4" width="2" height="2" fill="#4a84d4"/><rect x="1" y="9" width="2" height="2" fill="#eef5ff"/><rect x="0" y="8" width="2" height="2" fill="#4a84d4"/><rect x="1" y="13" width="2" height="2" fill="#eef5ff"/><rect x="0" y="12" width="2" height="2" fill="#4a84d4"/></svg><svg class="a" style="left:565px;top:58px" width="3" height="16" viewBox="0 0 3 16"><rect x="1" y="1" width="2" height="2" fill="#eef5ff"/><rect x="0" y="0" width="2" height="2" fill="#4a84d4"/><rect x="1" y="5" width="2" height="2" fill="#eef5ff"/><rect x="0" y="4" width="2" height="2" fill="#4a84d4"/><rect x="1" y="9" width="2" height="2" fill="#eef5ff"/><rect x="0" y="8" width="2" height="2" fill="#4a84d4"/><rect x="1" y="13" width="2" height="2" fill="#eef5ff"/><rect x="0" y="12" width="2" height="2" fill="#4a84d4"/></svg><svg class="a" style="left:648px;top:58px" width="3" height="16" viewBox="0 0 3 16"><rect x="1" y="1" width="2" height="2" fill="#eef5ff"/><rect x="0" y="0" width="2" height="2" fill="#4a84d4"/><rect x="1" y="5" width="2" height="2" fill="#eef5ff"/><rect x="0" y="4" width="2" height="2" fill="#4a84d4"/><rect x="1" y="9" width="2" height="2" fill="#eef5ff"/><rect x="0" y="8" width="2" height="2" fill="#4a84d4"/><rect x="1" y="13" width="2" height="2" fill="#eef5ff"/><rect x="0" y="12" width="2" height="2" fill="#4a84d4"/></svg><svg class="a" style="left:696px;top:58px" width="3" height="16" viewBox="0 0 3 16"><rect x="1" y="1" width="2" height="2" fill="#eef5ff"/><rect x="0" y="0" width="2" height="2" fill="#4a84d4"/><rect x="1" y="5" width="2" height="2" fill="#eef5ff"/><rect x="0" y="4" width="2" height="2" fill="#4a84d4"/><rect x="1" y="9" width="2" height="2" fill="#eef5ff"/><rect x="0" y="8" width="2" height="2" fill="#4a84d4"/><rect x="1" y="13" width="2" height="2" fill="#eef5ff"/><rect x="0" y="12" width="2" height="2" fill="#4a84d4"/></svg><svg class="a" style="left:352px;top:26px" width="797" height="54" viewBox="352 26 797 54"><path d="M363 40l7.500-7.500 2.500 2.500-2.500 2.500h6.500v5h-6.500l2.500 2.500-2.500 2.500z" fill="#c4c4c4"/><path d="M384.500 31.500l2.500 2.500-2.500 2.500 M388.500 31.500l2.500 2.500-2.500 2.500" fill="none" stroke="#333" stroke-width="1.200"/><g transform="translate(378 27)" fill="#fff" stroke="#333" stroke-width="1"><path d="M33.500 10.500v-4h3l1 1h2.500v3z"/><path d="M40.500 14.500v-4h3l1 1h2v3z"/><path d="M40.500 19.500v-4h3l1 1h2v3z"/><path d="M35.500 10.500v8h5 M35.500 13h5" fill="none"/></g><g fill="#fff" stroke="#333"><path d="M447.500 33.500h6l3 3v9h-9z"/><path d="M450.500 36v5 M449 38l1.500-2 1.500 2" fill="none" stroke="#555" stroke-width=".8"/><path d="M454.500 36.500l5 4-5 6-3-3z" fill="#eef2fd"/><path d="M452.500 44l2.500 2.500 4-5" fill="none" stroke="#2b62c0" stroke-width="1.400"/></g><g transform="translate(489.500 39.500)"><circle r="4.400" fill="none" stroke="#1e1e1e" stroke-width="3.200"/><rect x="-1.600" y="-7.500" width="3.200" height="3.200" fill="#1e1e1e" transform="rotate(0)"/><rect x="-1.600" y="-7.500" width="3.200" height="3.200" fill="#1e1e1e" transform="rotate(45)"/><rect x="-1.600" y="-7.500" width="3.200" height="3.200" fill="#1e1e1e" transform="rotate(90)"/><rect x="-1.600" y="-7.500" width="3.200" height="3.200" fill="#1e1e1e" transform="rotate(135)"/><rect x="-1.600" y="-7.500" width="3.200" height="3.200" fill="#1e1e1e" transform="rotate(180)"/><rect x="-1.600" y="-7.500" width="3.200" height="3.200" fill="#1e1e1e" transform="rotate(225)"/><rect x="-1.600" y="-7.500" width="3.200" height="3.200" fill="#1e1e1e" transform="rotate(270)"/><rect x="-1.600" y="-7.500" width="3.200" height="3.200" fill="#1e1e1e" transform="rotate(315)"/></g><path d="M504.5 38.5h6l-3 3.500z" fill="#1a1a1a"/><g fill="#fff" stroke="#333" stroke-width=".9"><path d="M538 35v3 M538 36l-6.500 9 M538 36l6.500 9 M536 40l-1.500 5 M540 40l1.500 5" fill="none"/><rect x="536.500" y="32.500" width="3" height="3"/><rect x="534.500" y="38.500" width="2.500" height="2.500"/><rect x="539" y="38.500" width="2.500" height="2.500"/><rect x="530.500" y="44.500" width="2.500" height="2.500"/><rect x="534.500" y="44.500" width="2.500" height="2.500"/><rect x="539" y="44.500" width="2.500" height="2.500"/><rect x="543" y="44.500" width="2.500" height="2.500"/></g><path d="M552.5 38.5h6l-3 3.500z" fill="#1a1a1a"/><g fill="none" stroke="#b1bac8"><path d="M566.500 39.500h13 M572.500 33v13"/></g><rect x="570.500" y="37.500" width="4" height="4" fill="#b1bac8"/><rect x="575.500" y="42.500" width="4" height="4" fill="#b1bac8"/><path d="M587.5 38.5h6l-3 3.500z" fill="#a8a8a8"/><g fill="none" stroke="#b1bac8" stroke-width="1.200"><path d="M603.500 44.500l9-9"/><path d="M626.500 44v-8.500h9"/><path d="M649 35.500h10l-8.500 8.500"/><path d="M672.500 44q0-8.500 9-8.500"/><path d="M694 36h4.500 M697.500 43.500l6.500-6.500 M702 44.500h4.500"/></g><rect x="602" y="43" width="3" height="3" fill="#b1bac8"/><rect x="611" y="34" width="3" height="3" fill="#b1bac8"/><rect x="625" y="34" width="3" height="3" fill="#b1bac8"/><rect x="634" y="34" width="3" height="3" fill="#b1bac8"/><rect x="625" y="43" width="3" height="3" fill="#b1bac8"/><rect x="648" y="34" width="3" height="3" fill="#b1bac8"/><rect x="657" y="34" width="3" height="3" fill="#b1bac8"/><rect x="648" y="42" width="3" height="3" fill="#b1bac8"/><rect x="671" y="43" width="3" height="3" fill="#b1bac8"/><rect x="680" y="34" width="3" height="3" fill="#b1bac8"/><rect x="694" y="43" width="3" height="3" fill="#b1bac8"/><rect x="703" y="34" width="3" height="3" fill="#b1bac8"/><g fill="none" stroke="#c3c3c3" stroke-width="1.200"><path d="M743 33l-11 10 M732 36l4 4h8"/><circle cx="731" cy="37.500" r="2"/><rect x="731.500" y="43.500" width="3" height="4" rx="1"/></g><g fill="#c3c3c3" stroke="#b4b4b4" stroke-width=".8"><path d="M752.500 36.500h5l2 2v7.500h-7z"/><path d="M756.500 33.500h5l3 3v8.500h-8z"/></g><g><rect x="776.500" y="35.500" width="10" height="11" rx="1.200" fill="#fff" stroke="#1e1e1e" stroke-width="1.400"/><rect x="778.500" y="33.500" width="6" height="3" rx="1" fill="#d9dcf4" stroke="#333" stroke-width=".8"/></g><g fill="#c3c3c3"><rect x="800" y="36" width="10" height="2"/><rect x="803" y="34" width="4" height="2"/><path d="M801 39h8l-.8 7.500h-6.400z"/></g><g fill="#c3c3c3"><rect x="821" y="33" width="9" height="9"/><rect x="825" y="37" width="11" height="2" stroke="#c9dcf8" stroke-width=".6"/><rect x="828" y="35.500" width="4" height="1.500"/><path d="M826 40h9l-.8 7h-7.400z" stroke="#c9dcf8" stroke-width=".6"/></g><g fill="#c3c3c3"><path d="M857.500 42l4.500-8.500 8.500 7.500-1.500 2h-10z"/><rect x="859" y="43.500" width="12" height="4"/></g><path d="M878.5 38.8h6l-3 3.500z" fill="#a8a8a8"/><g fill="#c3c3c3"><path d="M893 45.500l9.500-12 3 2.500-7 9.500z"/><rect x="893.500" y="43.500" width="12.500" height="4"/></g><path d="M913.5 38.8h6l-3 3.500z" fill="#a8a8a8"/><g fill="#c3c3c3"><path d="M931 43l3-9h1.500l3 9h-1.800l-.7-2.500h-2.600l-.7 2.500z"/><rect x="929" y="43.500" width="12" height="4"/></g><path d="M948.5 38.8h6l-3 3.500z" fill="#a8a8a8"/><rect x="958" y="30" width="186" height="21" fill="#cbcbcb"/><rect x="960" y="32" width="166" height="17" fill="#efefef"/><rect x="1127" y="32" width="16" height="17" fill="#d3d3d3"/><path d="M1130.500 38.500l4 4 4-4" fill="none" stroke="#a6a6a6" stroke-width="1.200"/><rect x="1146" y="30" width="10" height="21" fill="#cbcbcb"/><rect x="1148" y="32" width="8" height="17" fill="#efefef"/><circle cx="416.5" cy="64.5" r="5" fill="#fff" stroke="#3a3a3a" stroke-width="1.100"/><path d="M420.1 68.1l4.800 4.800" stroke="#2a3f8f" stroke-width="2" fill="none"/><rect x="414.500" y="62.500" width="4" height="4" fill="none" stroke="#333" stroke-width=".9"/><circle cx="439.500" cy="64.500" r="5.500" fill="#c4c4c4"/><path d="M443.500 68.500l4.500 4.500" stroke="#c0c0c0" stroke-width="2.200"/><text x="439.500" y="66.800" font-size="6" fill="#e6e6e6" text-anchor="middle" font-family="Liberation Sans, sans-serif">1:1</text><circle cx="462.5" cy="64.5" r="5" fill="#fff" stroke="#3a3a3a" stroke-width="1.100"/><path d="M466.1 68.1l4.800 4.800" stroke="#2a3f8f" stroke-width="2" fill="none"/><path d="M460 64.500h5 M462.500 62v5" stroke="#333" stroke-width="1.100"/><circle cx="485.5" cy="64.5" r="5" fill="#fff" stroke="#3a3a3a" stroke-width="1.100"/><path d="M489.1 68.1l4.800 4.800" stroke="#2a3f8f" stroke-width="2" fill="none"/><path d="M483 64.500h5" stroke="#333" stroke-width="1.100"/><rect x="499.500" y="55.500" width="57" height="21" fill="#fff" stroke="#adadad"/><path d="M542.500 64.500l4 4 4-4" fill="none" stroke="#555" stroke-width="1.200"/><g fill="#fff" stroke="#333"><rect x="574.500" y="59.500" width="13" height="13" fill="#d2d2d2" stroke-width="1.200"/><rect x="576.500" y="62.500" width="6" height="3"/><rect x="579.500" y="67.500" width="6" height="3"/></g><path d="M595.5 65h6l-3 3.500z" fill="#1a1a1a"/><g stroke="#333" fill="#fff" stroke-width="1.200"><rect x="609.500" y="60.500" width="13" height="11"/></g><rect x="611" y="62.500" width="3" height="2" fill="#e8352a"/><rect x="611" y="65.500" width="3" height="2" fill="#f0a21c"/><rect x="611" y="68.500" width="3" height="2" fill="#4caa3c"/><path d="M615.500 63.500h5.500 M615.500 66.500h5.500 M615.500 69.500h5.500" stroke="#333"/><path d="M630.5 65h6l-3 3.500z" fill="#1a1a1a"/><path d="M660 59l8.500 6.500-8.500 6.500z" fill="#c2c2c2"/><path d="M678 65h6l-3 3.500z" fill="#a8a8a8"/><circle cx="710.500" cy="64.500" r="4.600" fill="none" stroke="#555" stroke-width="1.800"/><path d="M713.500 68l3.500 3.500" stroke="#555" stroke-width="2.200"/></svg><div class="t" style="left:962px;top:32px;color:#555">Arial</div><div class="t" style="left:503px;top:58px">100%</div>
<div class="a" style="left:352px;top:26px;width:4px;height:852px;background:#d8e7fc"></div><div class="a" style="left:356px;top:79px;width:793px;height:799px;background:#5f5f5f"></div><div class="a" style="left:358px;top:81px;width:791px;height:797px;background:#fff"></div><div class="a" style="left:363px;top:86px;width:779px;height:786px;box-sizing:border-box;border:1px solid #2b2b2b"></div><svg class="a" style="left:363px;top:86px" width="260" height="22" viewBox="0 0 260 22"><path d="M0 20.500H249.500l7.500-8V0" fill="none" stroke="#2b2b2b"/></svg><div class="t" style="left:370px;top:88px;font-weight:bold">bdd</div><div class="t" style="left:395px;top:88px;letter-spacing:-.02px">[Package] Structure [ Instance of the vehicle ]</div>
<div class="blk" style="left:372px;top:116px;width:750px;height:736px;background:linear-gradient(134.5deg,#ffeeb0 0%,#fffefa 100%)"><div class="st" style="top:2px;width:727px;font-size:11px">«block»</div><div class="nm" style="top:19px;left:319px;width:89px;text-align:left;border-bottom:1px solid #000;height:12px;line-height:14px;right:auto">vehicle : Vehicle</div><div class="sep" style="top:36px"></div><div class="at" style="top:40px">engine = vehicle.engine</div><div class="at" style="top:55px">transmission = vehicle.transmission</div><div class="at" style="top:70px">wheel = vehicle.wheel</div><div class="sep" style="top:93px"></div><svg class="a" style="right:7px;top:5px" width="14" height="13" viewBox="0 0 14 13"><defs><linearGradient id="ig" x1="0" y1="0" x2="1" y2="0"><stop offset="0" stop-color="#d9c992"/><stop offset="1" stop-color="#f3ebcb"/></linearGradient></defs><rect x=".5" y=".5" width="13" height="12" fill="url(#ig)" stroke="#3f3f46"/><path d="M1 8.500h12 M1 10.500h12" stroke="#3f3f46"/></svg></div>
<div class="blk" style="left:386px;top:228px;width:480px;height:608px;background:linear-gradient(141.7deg,#ffeeb0 0%,#fffefa 100%)"><div class="st" style="top:2px;width:457px;font-size:11px">«block»</div><div class="nm" style="top:19px;left:169px;width:119px;text-align:left;border-bottom:1px solid #000;height:12px;line-height:14px;right:auto">vehicle.wheel : Wheel</div><div class="sep" style="top:36px"></div><div class="at" style="top:40px">brake = vehicle.wheel.brake</div><div class="at" style="top:55px">diameter = 16.0</div><div class="at" style="top:70px">tire = vehicle.wheel.tire</div><div class="sep" style="top:93px"></div><svg class="a" style="right:7px;top:5px" width="14" height="13" viewBox="0 0 14 13"><defs><linearGradient id="ig" x1="0" y1="0" x2="1" y2="0"><stop offset="0" stop-color="#d9c992"/><stop offset="1" stop-color="#f3ebcb"/></linearGradient></defs><rect x=".5" y=".5" width="13" height="12" fill="url(#ig)" stroke="#3f3f46"/><path d="M1 8.500h12 M1 10.500h12" stroke="#3f3f46"/></svg></div>
<div class="blk" style="left:407px;top:347px;width:274px;height:463px;background:linear-gradient(149.4deg,#ffeeb0 0%,#fffefa 100%)"><div class="st" style="top:2px;width:251px;font-size:11px">«block»</div><div class="nm" style="top:19px;left:50px;width:152.5px;text-align:left;border-bottom:1px solid #000;height:12px;line-height:14px;right:auto">vehicle.wheel.brake : Brake</div><div class="sep" style="top:36px"></div><div class="at" style="top:40px">caliper = vehicle.wheel.brake.caliper</div><div class="at" style="top:55px">pad = vehicle.wheel.brake.pad</div><div class="at" style="top:70px">rotor = vehicle.wheel.brake.rotor</div><div class="sep" style="top:93px"></div><svg class="a" style="right:7px;top:5px" width="14" height="13" viewBox="0 0 14 13"><defs><linearGradient id="ig" x1="0" y1="0" x2="1" y2="0"><stop offset="0" stop-color="#d9c992"/><stop offset="1" stop-color="#f3ebcb"/></linearGradient></defs><rect x=".5" y=".5" width="13" height="12" fill="url(#ig)" stroke="#3f3f46"/><path d="M1 8.500h12 M1 10.500h12" stroke="#3f3f46"/></svg></div>
<div class="blk" style="left:421px;top:466px;width:245px;height:125px;background:linear-gradient(117.0deg,#ffeeb0 0%,#fffefa 100%)"><div class="st" style="top:2px;width:222px;font-size:11px">«block»</div><div class="nm" style="top:19px;left:12.5px;width:198.5px;text-align:left;border-bottom:1px solid #000;height:12px;line-height:14px;right:auto">vehicle.wheel.brake.caliper : Caliper</div><div class="sep" style="top:36px"></div><div class="at" style="top:40px">caliperFrictionForce = "140"{unit = newton}</div><div class="at" style="top:55px">diameter = "0.038"{unit = metre}</div><div class="at" style="top:70px">partNumber = ""</div><div class="at" style="top:85px">pressure = "7.8"{unit = megapascal}</div><div class="at" style="top:100px">springForce = "250"{unit = newton}</div><svg class="a" style="right:7px;top:5px" width="14" height="13" viewBox="0 0 14 13"><defs><linearGradient id="ig" x1="0" y1="0" x2="1" y2="0"><stop offset="0" stop-color="#d9c992"/><stop offset="1" stop-color="#f3ebcb"/></linearGradient></defs><rect x=".5" y=".5" width="13" height="12" fill="url(#ig)" stroke="#3f3f46"/><path d="M1 8.500h12 M1 10.500h12" stroke="#3f3f46"/></svg></div>
<div class="blk" style="left:421px;top:592px;width:196px;height:110px;background:linear-gradient(119.3deg,#ffeeb0 0%,#fffefa 100%)"><div class="st" style="top:2px;width:173px;font-size:11px">«block»</div><div class="nm" style="top:19px;left:5.4px;width:163px;text-align:left;border-bottom:1px solid #000;height:12px;line-height:14px;right:auto">vehicle.wheel.brake.pad : Pad</div><div class="sep" style="top:36px"></div><div class="at" style="top:40px">brakeMU = 0.6</div><div class="at" style="top:55px">centerLength = 0.08{unit = metre}</div><div class="at" style="top:70px">thickness = 0.01{unit = metre}</div><div class="at" style="top:85px">width = 0.038{unit = metre}</div><svg class="a" style="right:7px;top:5px" width="14" height="13" viewBox="0 0 14 13"><defs><linearGradient id="ig" x1="0" y1="0" x2="1" y2="0"><stop offset="0" stop-color="#d9c992"/><stop offset="1" stop-color="#f3ebcb"/></linearGradient></defs><rect x=".5" y=".5" width="13" height="12" fill="url(#ig)" stroke="#3f3f46"/><path d="M1 8.500h12 M1 10.500h12" stroke="#3f3f46"/></svg></div>
<div class="blk" style="left:421px;top:718px;width:214px;height:65px;background:linear-gradient(106.9deg,#ffeeb0 0%,#fffefa 100%)"><div class="st" style="top:2px;width:191px;font-size:11px">«block»</div><div class="nm" style="top:19px;left:5px;width:181px;text-align:left;border-bottom:1px solid #000;height:12px;line-height:14px;right:auto">vehicle.wheel.brake.rotor : Rotor</div><div class="sep" style="top:36px"></div><div class="at" style="top:40px">outerDiameter = "0.25"{unit = metre}</div><svg class="a" style="right:7px;top:5px" width="14" height="13" viewBox="0 0 14 13"><defs><linearGradient id="ig" x1="0" y1="0" x2="1" y2="0"><stop offset="0" stop-color="#d9c992"/><stop offset="1" stop-color="#f3ebcb"/></linearGradient></defs><rect x=".5" y=".5" width="13" height="12" fill="url(#ig)" stroke="#3f3f46"/><path d="M1 8.500h12 M1 10.500h12" stroke="#3f3f46"/></svg></div>
<div class="blk" style="left:687px;top:347px;width:162px;height:80px;background:linear-gradient(116.3deg,#ffeeb0 0%,#fffefa 100%)"><div class="st" style="top:2px;width:139px;font-size:11px">«block»</div><div class="nm" style="top:19px;left:5px;width:129px;text-align:left;border-bottom:1px solid #000;height:12px;line-height:14px;right:auto">vehicle.wheel.tire : Tire</div><div class="sep" style="top:36px"></div><div class="at" style="top:40px">diameter = "22.0"</div><div class="at" style="top:55px">tireMU = "0.9"</div><svg class="a" style="right:7px;top:5px" width="14" height="13" viewBox="0 0 14 13"><defs><linearGradient id="ig" x1="0" y1="0" x2="1" y2="0"><stop offset="0" stop-color="#d9c992"/><stop offset="1" stop-color="#f3ebcb"/></linearGradient></defs><rect x=".5" y=".5" width="13" height="12" fill="url(#ig)" stroke="#3f3f46"/><path d="M1 8.500h12 M1 10.500h12" stroke="#3f3f46"/></svg></div>
<div class="blk" style="left:876px;top:235px;width:235px;height:95px;background:linear-gradient(112.0deg,#ffeeb0 0%,#fffefa 100%)"><div class="st" style="top:2px;width:212px;font-size:11px">«block»</div><div class="nm" style="top:19px;left:5.4px;width:202.4px;text-align:left;border-bottom:1px solid #000;height:12px;line-height:14px;right:auto">vehicle.transmission : Transmission</div><div class="sep" style="top:36px"></div><div class="at" style="top:40px">axleRPM = 30.0</div><div class="at" style="top:55px">numAxleGearTeeth = 100.0</div><div class="at" style="top:70px">numEngineGearTeeth = 50.0</div><svg class="a" style="right:7px;top:5px" width="14" height="13" viewBox="0 0 14 13"><defs><linearGradient id="ig" x1="0" y1="0" x2="1" y2="0"><stop offset="0" stop-color="#d9c992"/><stop offset="1" stop-color="#f3ebcb"/></linearGradient></defs><rect x=".5" y=".5" width="13" height="12" fill="url(#ig)" stroke="#3f3f46"/><path d="M1 8.500h12 M1 10.500h12" stroke="#3f3f46"/></svg></div>
<div class="blk" style="left:883px;top:340px;width:159px;height:65px;background:linear-gradient(112.2deg,#ffeeb0 0%,#fffefa 100%)"><div class="st" style="top:2px;width:136px;font-size:11px">«block»</div><div class="nm" style="top:19px;left:5.7px;width:125.3px;text-align:left;border-bottom:1px solid #000;height:12px;line-height:14px;right:auto">vehicle.engine : Engine</div><div class="sep" style="top:36px"></div><div class="at" style="top:40px">engineRPM = 0.0</div><svg class="a" style="right:7px;top:5px" width="14" height="13" viewBox="0 0 14 13"><defs><linearGradient id="ig" x1="0" y1="0" x2="1" y2="0"><stop offset="0" stop-color="#d9c992"/><stop offset="1" stop-color="#f3ebcb"/></linearGradient></defs><rect x=".5" y=".5" width="13" height="12" fill="url(#ig)" stroke="#3f3f46"/><path d="M1 8.500h12 M1 10.500h12" stroke="#3f3f46"/></svg></div>
<div class="ob" style="left:368px;top:110px;width:761px;height:749px;border-radius:12px"></div><div class="a" style="left:650px;top:104px;width:2px;height:7px;background:#ff6600"></div><div class="ann" style="left:631px;top:88px;text-align:left">Shapes of instances</div>
</body></html>
